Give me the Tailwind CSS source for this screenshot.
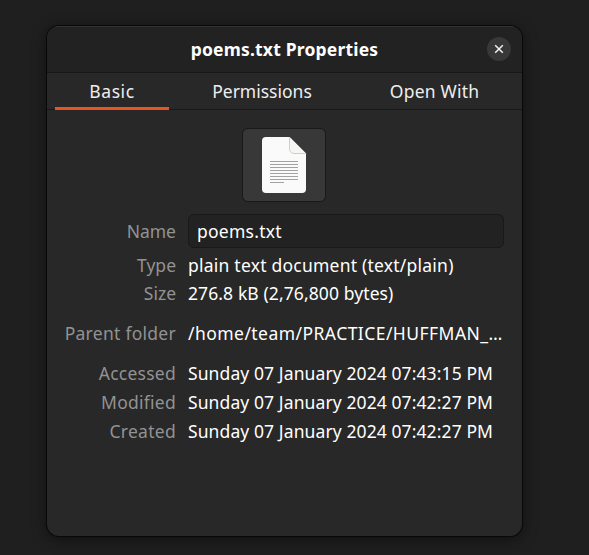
<!DOCTYPE html>
<html lang="en">
<head>
<meta charset="utf-8">
<title>poems.txt Properties</title>
<script src="https://cdn.jsdelivr.net/npm/@tailwindcss/browser@4"></script>
</head>
<body class="w-[589px] h-[555px] overflow-hidden bg-[#1f1f1f] pt-[26px] pl-[47px] font-['Noto_Sans',sans-serif] text-[17.5px] leading-[28px] text-white">
<main class="w-[475px] h-[510px] rounded-[12px] bg-[#282828] overflow-hidden flex flex-col shadow-[0_0_0_1px_#080808,0_3px_14px_2px_rgba(0,0,0,0.4)]">
  <header class="h-[47px] shrink-0 bg-[#222222] border-t border-t-[#343434] border-b border-b-[#181818] grid grid-cols-[1fr_auto_1fr] items-center px-[11px]">
    <span></span>
    <h1 class="font-bold whitespace-nowrap tracking-[0.2px] -mt-[2px]">poems.txt Properties</h1>
    <button class="justify-self-end size-[24px] rounded-full bg-[#383838] flex items-center justify-center -mt-[2px]" aria-label="Close">
      <svg width="10" height="10" viewBox="0 0 10 10" fill="none" stroke="#f2f2f2" stroke-width="1.5"><path d="M1.2 1.2l7.6 7.6M8.8 1.2L1.2 8.8"/></svg>
    </button>
  </header>
  <nav class="h-[37px] shrink-0 border-b border-[#181818] flex gap-[7px] px-[8px] text-[#eeeeee]">
    <div class="w-[114px] h-[37px] border-b-[3px] border-[#e95420] flex justify-center pt-[4px] tracking-[0.6px]">Basic</div>
    <div class="w-[172px] flex justify-center pt-[4px]">Permissions</div>
    <div class="w-[159px] flex justify-center pt-[4px] tracking-[0.2px]">Open With</div>
  </nav>
  <div class="flex justify-center pt-[18px] pr-[1px]">
    <button class="w-[84px] h-[74px] rounded-[6px] border border-[#191919] bg-[#383838] flex items-center justify-center" aria-label="Icon">
      <svg width="46" height="58" viewBox="0 0 46 58">
        <path d="M5 1H28.5L45 17.500V53a4 4 0 0 1-4 4H5a4 4 0 0 1-4-4V5a4 4 0 0 1 4-4z" fill="#fafafa"/>
        <path d="M28.500 1V13a4.500 4.500 0 0 0 4.500 4.500H45z" fill="#f6f6f4"/>
        <path d="M28.500 1V13a4.500 4.500 0 0 0 4.500 4.500H45" fill="none" stroke="#cfcfca"/>
        <path d="M9 25.500h28M9 28.500h28M9 31.500h28M9 34.500h28M9 37.500h28M9 40.500h28M9 43.500h28M9 46.500h14" stroke="#a2a2a2"/>
      </svg>
    </button>
  </div>
  <dl class="grid grid-cols-[129px_316px] gap-x-[12px] pt-[12px] whitespace-nowrap [&>dt]:text-right [&>dt]:text-[#929292]">
    <dt class="pt-[3px]">Name</dt>
    <dd class="h-[34px] rounded-[6px] border border-[#191919] bg-[#222222] pl-[8px] pt-[2px] tracking-[0.25px]">poems.txt</dd>
    <dt class="h-[28px] mt-[3px]">Type</dt><dd class="mt-[3px] tracking-[0.23px]">plain text document (text/plain)</dd>
    <dt class="h-[28px]">Size</dt><dd class="tracking-[0.1px]">276.8 kB (2,76,800 bytes)</dd>
    <dt class="mt-[12px] tracking-[0.27px]">Parent folder</dt><dd class="mt-[12px] tracking-[0.45px]">/home/team/PRACTICE/HUFFMAN_…</dd>
    <dt class="mt-[12px] h-[29px] tracking-[0.25px]">Accessed</dt><dd class="mt-[12px] tracking-[0.1px]">Sunday 07 January 2024 07:43:15 PM</dd>
    <dt class="h-[29px] tracking-[0.25px]">Modified</dt><dd class="tracking-[0.1px]">Sunday 07 January 2024 07:42:27 PM</dd>
    <dt class="tracking-[0.28px]">Created</dt><dd class="tracking-[0.1px]">Sunday 07 January 2024 07:42:27 PM</dd>
  </dl>
</main>
</body>
</html>
